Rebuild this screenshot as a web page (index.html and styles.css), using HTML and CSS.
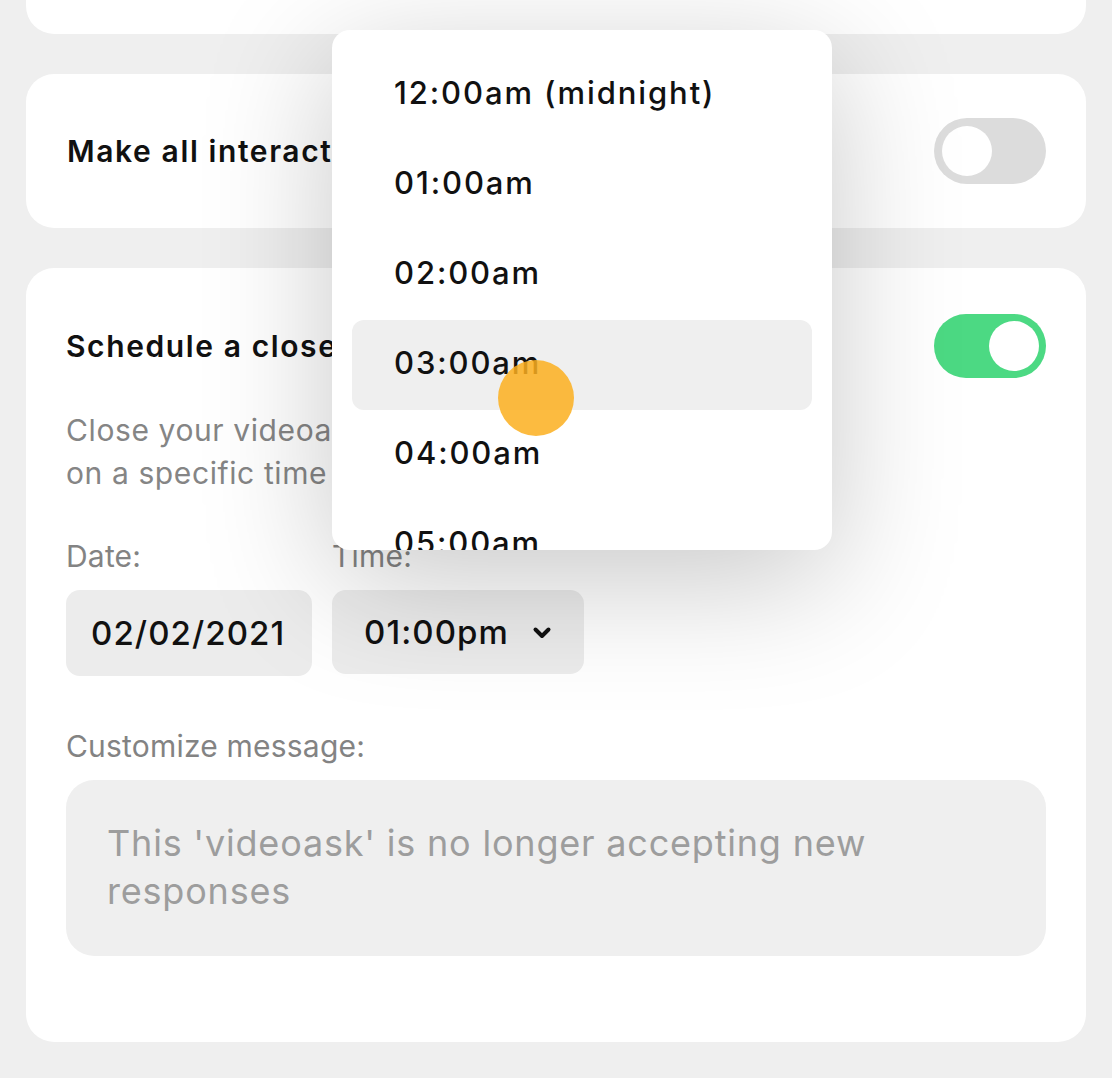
FILE: index.html
```html
<!DOCTYPE html>
<html lang="en">
<head>
    <meta charset="UTF-8">
    <meta name="viewport" content="width=device-width, initial-scale=1.0">
    <title>Close settings</title>
    <link rel="stylesheet" href="styles.css">
</head>
<body>
    <div class="page">
        <section class="card card-top"></section>

        <section class="card row-card">
            <span class="row-title">Make all interactions private</span>
            <span class="toggle"><span class="knob"></span></span>
        </section>

        <section class="card schedule">
            <div class="row-head">
                <span class="row-title">Schedule a close date</span>
                <span class="toggle on"><span class="knob"></span></span>
            </div>
            <p class="hint">Close your videoask automatically based<br>on a specific time and date</p>

            <div class="fields">
                <div class="field">
                    <label class="label">Date:</label>
                    <div class="input date">02/02/2021</div>
                </div>
                <div class="field">
                    <label class="label">Time:</label>
                    <div class="select-wrap">
                        <div class="input time">
                            01:00pm
                            <svg class="chevron" width="20" height="14" viewBox="0 0 20 14">
                                <polyline points="3.5,3.5 10,10 16.5,3.5" fill="none" stroke="#111" stroke-width="4" stroke-linecap="round" stroke-linejoin="round"/>
                            </svg>
                        </div>

                        <div class="dropdown">
                            <ul class="options">
                                <li>12:00am (midnight)</li>
                                <li>01:00am</li>
                                <li>02:00am</li>
                                <li class="active">03:00am</li>
                                <li>04:00am</li>
                                <li>05:00am</li>
                                <li>06:00am</li>
                            </ul>
                            <span class="touch"></span>
                        </div>
                    </div>
                </div>
            </div>

            <label class="label message-label">Customize message:</label>
            <div class="textarea">This 'videoask' is no longer accepting new responses</div>
        </section>
    </div>
</body>
</html>
```

FILE: styles.css
```css
body {
    margin: 0;
    background-color: #efefef;
    font-family: 'Inter', 'Noto Sans', sans-serif;
    color: #111;
    overflow: hidden;
    height: 1078px;
}

.page {
    display: flex;
    flex-direction: column;
    gap: 40px;
    padding: 0 26px;
}

.card {
    background-color: white;
    border-radius: 28px;
}

.card-top {
    height: 34px;
    border-top-left-radius: 0;
    border-top-right-radius: 0;
}

.row-card {
    height: 154px;
    display: flex;
    align-items: center;
    justify-content: space-between;
    padding: 0 40px 0 41px;
    box-sizing: border-box;
}

.row-title {
    font-size: 30px;
    font-weight: 600;
    letter-spacing: 1.6px;
    white-space: nowrap;
}

.toggle {
    width: 112px;
    height: 66px;
    border-radius: 33px;
    background-color: #dcdcdc;
    display: flex;
    align-items: center;
    padding: 0 8px;
    box-sizing: border-box;
}

.toggle .knob {
    width: 50px;
    height: 50px;
    border-radius: 50%;
    background-color: white;
}

.toggle.on {
    height: 64px;
    background-color: #4cd983;
    justify-content: flex-end;
    padding: 0 7px;
}

.schedule {
    padding: 46px 40px 86px 40px;
}

.row-head {
    display: flex;
    align-items: center;
    justify-content: space-between;
}

.hint {
    margin: 31px 0 0 0;
    font-size: 30px;
    line-height: 43px;
    letter-spacing: 0.6px;
    color: #858585;
}

.fields {
    display: flex;
    gap: 20px;
    margin-top: 41px;
}

.field {
    display: flex;
    flex-direction: column;
}

.label {
    font-size: 30px;
    line-height: 40px;
    letter-spacing: 0.2px;
    color: #838383;
    margin-bottom: 14px;
}

.input {
    height: 86px;
    border-radius: 14px;
    background-color: #ececec;
    font-size: 33px;
    font-weight: 500;
    letter-spacing: 1.1px;
    display: flex;
    align-items: center;
    box-sizing: border-box;
}

.date {
    width: 246px;
    padding-left: 25px;
}

.select-wrap {
    position: relative;
}

.time {
    width: 252px;
    height: 84px;
    padding: 0 32px 0 32px;
    justify-content: space-between;
}

.chevron {
    margin-top: 2px;
}

.dropdown {
    position: absolute;
    left: 0;
    bottom: 124px;
    width: 500px;
    height: 520px;
    background-color: white;
    border-radius: 18px;
    box-shadow: 0 30px 130px rgba(0, 0, 0, 0.22);
    overflow: hidden;
}

.options {
    list-style: none;
    margin: 0;
    padding: 20px 20px 0 20px;
}

.options li {
    height: 90px;
    display: flex;
    align-items: center;
    padding: 0 0 6px 42px;
    box-sizing: border-box;
    border-radius: 12px;
    font-size: 31px;
    font-weight: 500;
    letter-spacing: 1.9px;
}

.options li.active {
    background-color: #efefef;
}

.touch {
    position: absolute;
    left: 166px;
    top: 330px;
    width: 76px;
    height: 76px;
    border-radius: 50%;
    background-color: rgba(252, 175, 30, 0.85);
}

.message-label {
    display: block;
    margin-top: 50px;
    margin-bottom: 14px;
}

.textarea {
    height: 176px;
    box-sizing: border-box;
    border-radius: 28px;
    background-color: #efefef;
    padding: 39px 120px 40px 41px;
    font-size: 36px;
    line-height: 48px;
    letter-spacing: 0.8px;
    color: #9d9d9d;
}
```
